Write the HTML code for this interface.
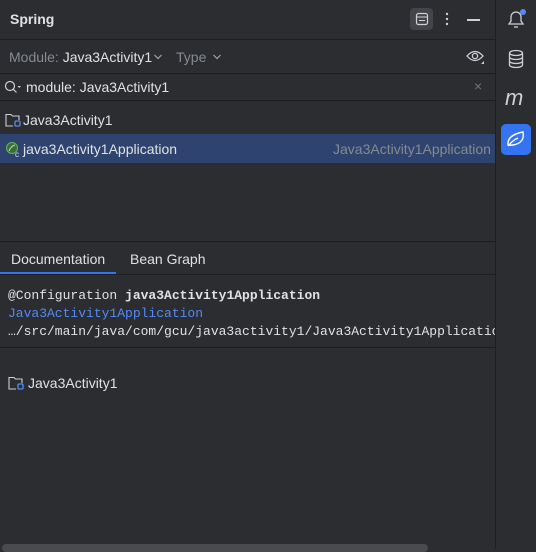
<!DOCTYPE html>
<html><head><meta charset="utf-8"><style>
*{margin:0;padding:0;box-sizing:border-box}
body{width:536px;height:549px;background:#2b2d30;font-family:"Liberation Sans",sans-serif;color:#dfe1e5;position:relative;overflow:hidden;font-size:13px}
.a{position:absolute;white-space:nowrap}
.hl{position:absolute;left:0;width:495px;height:1px;background:#1e1f22}
.mono{font-family:"Liberation Mono",monospace;font-size:13px}
</style></head><body>
<div class="a" style="left:10px;top:11px;font-weight:bold;font-size:14px;color:#dfe1e5">Spring</div>
<div class="a" style="left:410px;top:8px;width:23px;height:22px;background:#43454a;border-radius:4px"></div>
<svg class="a" style="left:415px;top:12px" width="14" height="14" viewBox="0 0 14 14"><rect x="1.5" y="1.5" width="11" height="11" rx="2" fill="none" stroke="#ced0d6" stroke-width="1.2"/><line x1="2" y1="5" x2="12" y2="5" stroke="#ced0d6"/><line x1="4" y1="8.5" x2="10" y2="8.5" stroke="#ced0d6"/></svg>
<svg class="a" style="left:444px;top:11px" width="6" height="16"><circle cx="3" cy="3" r="1.2" fill="#ced0d6"/><circle cx="3" cy="8" r="1.2" fill="#ced0d6"/><circle cx="3" cy="13" r="1.2" fill="#ced0d6"/></svg>
<div class="a" style="left:467px;top:19px;width:13px;height:1.5px;background:#ced0d6"></div>
<div class="hl" style="top:39px"></div>
<div class="a" style="left:9px;top:49px;font-size:14px;color:#868a91">Module: <span style="color:#dfe1e5">Java3Activity1</span></div>
<svg class="a" style="left:153px;top:53px" width="10" height="8"><path d="M1.5 2 L5 5.5 L8.5 2" fill="none" stroke="#a0a3a8" stroke-width="1.2"/></svg>
<div class="a" style="left:176px;top:49px;font-size:14px;color:#868a91">Type</div>
<svg class="a" style="left:212px;top:53px" width="10" height="8"><path d="M1.5 2 L5 5.5 L8.5 2" fill="none" stroke="#a0a3a8" stroke-width="1.2"/></svg>
<svg class="a" style="left:465px;top:48px" width="20" height="18" viewBox="0 0 20 18"><path d="M2 8 Q10 -1 18 8 Q10 17 2 8Z" fill="none" stroke="#ced0d6" stroke-width="1.3"/><circle cx="10" cy="8" r="2.6" fill="none" stroke="#ced0d6" stroke-width="1.3"/><path d="M16 16 L19 13 L19 16Z" fill="#ced0d6"/></svg>
<div class="hl" style="top:73px"></div>
<svg class="a" style="left:4px;top:80px" width="18" height="14" viewBox="0 0 18 14"><circle cx="6" cy="6" r="4.5" fill="none" stroke="#ced0d6" stroke-width="1.2"/><line x1="9.3" y1="9.3" x2="12.5" y2="12.5" stroke="#ced0d6" stroke-width="1.2"/><path d="M13.5 6 L17 6 L15.25 8Z" fill="#ced0d6"/></svg>
<div class="a" style="left:26px;top:79px;font-size:14px">module: Java3Activity1</div>
<div class="a" style="left:474px;top:78px;font-size:14px;color:#6f737a">×</div>
<div class="hl" style="top:100px"></div>
<svg class="a" style="left:5px;top:112px" width="16" height="16" viewBox="0 0 16 16"><path d="M8 14 H1 V2.5 H6 L7.5 4 H14 V8" fill="none" stroke="#ced0d6" stroke-width="1.1"/><rect x="10" y="9" width="5" height="5" rx="1" fill="none" stroke="#548af7" stroke-width="1.3"/></svg>
<div class="a" style="left:23px;top:112px;font-size:14px">Java3Activity1</div>
<div class="a" style="left:0;top:134px;width:495px;height:29px;background:#2e436e"></div>
<svg class="a" style="left:5px;top:141px" width="16" height="16" viewBox="0 0 16 16"><circle cx="7" cy="7" r="5.5" fill="#3d6b3a" stroke="#5fb85a" stroke-width="1"/><path d="M4 10 Q6 5 10 4" stroke="#b5e0a8" fill="none"/><text x="10" y="16" font-size="8" fill="#dfe1e5" font-family="Liberation Sans">c</text></svg>
<div class="a" style="left:23px;top:141px;font-size:14px">java3Activity1Application</div>
<div class="a" style="left:333px;top:141px;font-size:14px;color:#868a91">Java3Activity1Application</div>
<div class="hl" style="top:241px"></div>
<div class="a" style="left:11px;top:251px;font-size:14px">Documentation</div>
<div class="a" style="left:130px;top:251px;font-size:14px">Bean Graph</div>
<div class="a" style="left:0;top:272px;width:116px;height:2px;background:#3574f0"></div>
<div class="hl" style="top:274px"></div>
<div class="a mono" style="left:8px;top:288px">@Configuration <b>java3Activity1Application</b></div>
<div class="a mono" style="left:8px;top:306px;color:#548af7">Java3Activity1Application</div>
<div class="a mono" style="left:8px;top:324px;width:487px;overflow:hidden">…/src/main/java/com/gcu/java3activity1/Java3Activity1Application.java</div>
<div class="hl" style="top:347px"></div>
<svg class="a" style="left:8px;top:375px" width="16" height="16" viewBox="0 0 16 16"><path d="M8 14 H1 V2.5 H6 L7.5 4 H14 V8" fill="none" stroke="#ced0d6" stroke-width="1.1"/><rect x="10" y="9" width="5" height="5" rx="1" fill="none" stroke="#548af7" stroke-width="1.3"/></svg>
<div class="a" style="left:28px;top:375px;font-size:14px">Java3Activity1</div>
<div class="a" style="left:2px;top:544px;width:426px;height:8px;background:#4a4b4f;border-radius:4px"></div>
<div class="a" style="left:495px;top:0;width:1px;height:549px;background:#1e1f22"></div>
<svg class="a" style="left:505px;top:8px" width="22" height="22" viewBox="0 0 22 22"><path d="M4 16 H18 L16 13 V9 A5 5 0 0 0 6 9 V13 Z" fill="none" stroke="#ced0d6" stroke-width="1.3"/><path d="M9 19 H13" stroke="#ced0d6" stroke-width="1.3"/><circle cx="18" cy="4" r="3" fill="#548af7"/></svg>
<svg class="a" style="left:506px;top:49px" width="20" height="20" viewBox="0 0 20 20"><ellipse cx="10" cy="4" rx="6.5" ry="2.5" fill="none" stroke="#ced0d6" stroke-width="1.3"/><path d="M3.5 4 V16 A6.5 2.5 0 0 0 16.5 16 V4 M3.5 8 A6.5 2.5 0 0 0 16.5 8 M3.5 12 A6.5 2.5 0 0 0 16.5 12" fill="none" stroke="#ced0d6" stroke-width="1.3"/></svg>
<div class="a" style="left:505px;top:85px;font-size:22px;font-style:italic;color:#ced0d6;font-family:'Liberation Sans',sans-serif">m</div>
<div class="a" style="left:501px;top:124px;width:30px;height:31px;background:#3574f0;border-radius:5px"></div>
<svg class="a" style="left:505px;top:129px" width="22" height="20" viewBox="0 0 22 20"><path d="M3 16 Q2 6 18 3 Q20 14 8 16 Q5 16.5 3 16Z M3 17 Q8 11 13 9" fill="none" stroke="#fff" stroke-width="1.4"/></svg>
</body></html>
